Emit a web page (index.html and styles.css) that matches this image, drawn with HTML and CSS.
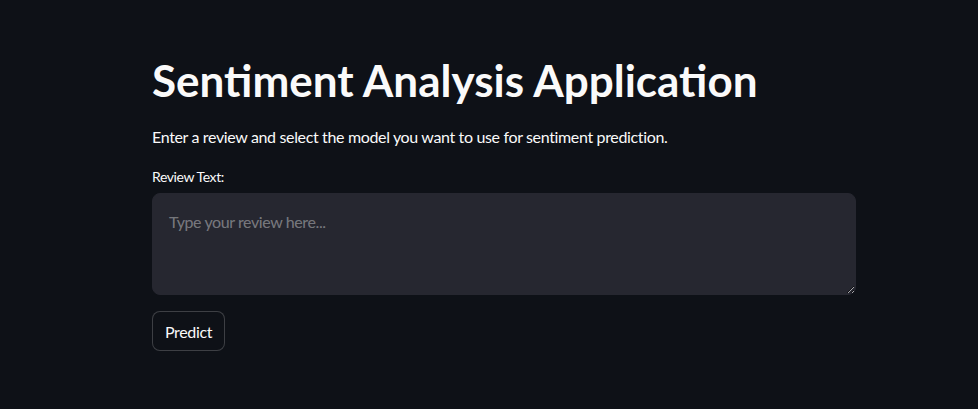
FILE: index.html
```html
<!DOCTYPE html>
<html lang="en">
<head>
<meta charset="utf-8">
<title>Sentiment Analysis Application</title>
<link rel="stylesheet" href="styles.css">
</head>
<body>
<main class="main">
  <div class="block">
    <h1 class="title">Sentiment Analysis Application</h1>
    <p class="intro">Enter a review and select the model you want to use for sentiment prediction.</p>
    <div class="field">
      <label class="label" for="review">Review Text:</label>
      <textarea id="review" class="textarea" placeholder="Type your review here..."></textarea>
    </div>
    <button class="btn" type="button">Predict</button>
  </div>
</main>
</body>
</html>
```

FILE: styles.css
```css
html, body {
  margin: 0;
  padding: 0;
  background: #0e1117;
  color: #fafafa;
  font-family: Lato, "Open Sans", sans-serif;
}
.main {
  display: flex;
  padding: 52px 0 0 152px;
}
.block {
  width: 704px;
  display: flex;
  flex-direction: column;
}
.title {
  margin: 0;
  font-size: 44px;
  font-weight: 700;
  line-height: 56px;
}
.intro {
  margin: 17px 0 0;
  font-size: 16px;
  line-height: 24px;
  letter-spacing: -0.35px;
}
.field {
  margin-top: 18px;
  display: flex;
  flex-direction: column;
}
.label {
  font-size: 14px;
  line-height: 20px;
  margin-bottom: 6px;
  letter-spacing: -0.4px;
}
.textarea {
  box-sizing: border-box;
  width: 100%;
  height: 102px;
  background: #262730;
  border: 1px solid #262730;
  border-radius: 8px;
  color: #fafafa;
  font-family: inherit;
  font-size: 16px;
  line-height: 24px;
  padding: 16px;
  outline: none;
  resize: vertical;
  letter-spacing: -0.4px;
}
.textarea::placeholder {
  color: rgba(250, 250, 250, 0.4);
}
.btn {
  align-self: flex-start;
  margin-top: 16px;
  height: 40px;
  padding: 0 12px;
  background: #0e1117;
  color: #fafafa;
  border: 1px solid rgba(250, 250, 250, 0.2);
  border-radius: 8px;
  font-family: inherit;
  font-size: 16px;
  letter-spacing: -0.35px;
}
```
